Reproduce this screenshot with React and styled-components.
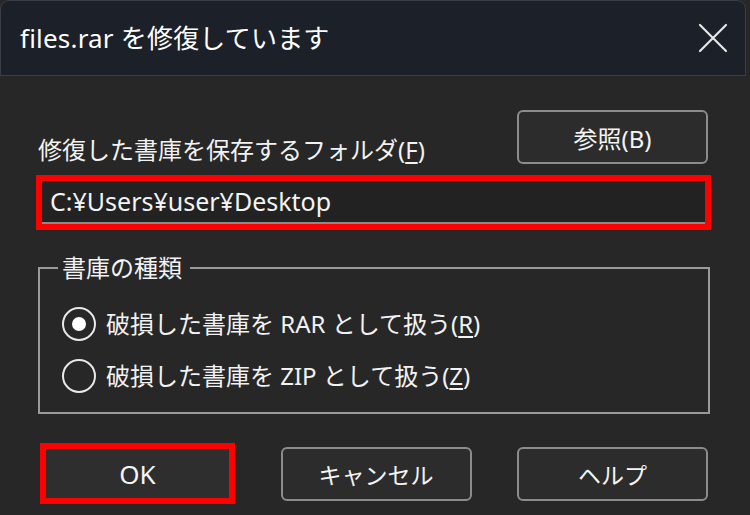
import React from "react";
import styled, { createGlobalStyle } from "styled-components";

const GlobalStyle = createGlobalStyle`
  html, body {
    margin: 0;
    padding: 0;
    background: #272727;
  }
  body {
    font-family: "Noto Sans", "Noto Sans CJK JP", sans-serif;
    color: #f2f2f2;
  }
`;

export default function App() {
  return (
    <>
      <GlobalStyle />
      <Window>
        <TitleBar>
          <Title>files.rar を修復しています</Title>
          <CloseButton aria-label="閉じる">
            <svg width="30" height="30" viewBox="0 0 30 30">
              <path d="M2 2 L28 28 M28 2 L2 28" stroke="#e6e6e6" strokeWidth="2.2" strokeLinecap="round" />
            </svg>
          </CloseButton>
        </TitleBar>

        <Body>
          <FolderRow>
            <Label>
              修復した書庫を保存するフォルダ(<u>F</u>)
            </Label>
            <Button $size="24px">参照(B)</Button>
          </FolderRow>

          <Highlight $top="11px">
            <PathInput defaultValue="C:¥Users¥user¥Desktop" />
          </Highlight>

          <Group>
            <Legend>書庫の種類</Legend>
            <RadioRow>
              <Radio $checked />
              <span>
                破損した書庫を RAR として扱う(<u>R</u>)
              </span>
            </RadioRow>
            <RadioRow>
              <Radio />
              <span>
                破損した書庫を ZIP として扱う(<u>Z</u>)
              </span>
            </RadioRow>
          </Group>

          <ButtonRow>
            <Highlight>
              <Button $plain $size="26px">OK</Button>
            </Highlight>
            <Button>キャンセル</Button>
            <Button>ヘルプ</Button>
          </ButtonRow>
        </Body>
      </Window>
    </>
  );
}

const Window = styled.div`
  width: 750px;
  height: 515px;
  display: flex;
  flex-direction: column;
  background: #272727;
  overflow: hidden;
`;

const TitleBar = styled.div`
  height: 74px;
  flex-shrink: 0;
  margin: 1px 5px 0 1px;
  padding: 0 20px 0 19px;
  display: flex;
  align-items: center;
  justify-content: space-between;
  background: #1c2029;
  border-radius: 8px 8px 0 0;
  box-shadow: 0 0 0 1px #3a3d44;
`;

const Title = styled.div`
  font-size: 26px;
  color: #ffffff;
  letter-spacing: 0.2px;
  padding-bottom: 3px;
`;

const CloseButton = styled.div`
  display: flex;
  margin-right: -3px;
  margin-top: -1px;
`;

const Body = styled.div`
  flex: 1;
  padding: 35px 39px 0 36px;
  display: flex;
  flex-direction: column;
  & > * {
    flex-shrink: 0;
  }
`;

const FolderRow = styled.div`
  display: flex;
  justify-content: space-between;
  align-items: flex-end;
  padding: 0 3px 0 2px;
`;

const Label = styled.div`
  font-size: 24px;
  line-height: 30px;
  margin-bottom: -1px;
  u {
    text-underline-offset: 3px;
  }
`;

const Button = styled.div`
  width: 191px;
  height: 54px;
  box-sizing: border-box;
  display: flex;
  align-items: center;
  justify-content: center;
  font-size: ${(p) => p.$size || "23px"};
  color: #f4f4f4;
  background: ${(p) => (p.$plain ? "#2e2e2e" : "#2c2c2c")};
  border: ${(p) => (p.$plain ? "none" : "2px solid #8c8c8c")};
  border-radius: ${(p) => (p.$plain ? "0" : "6px")};
`;

const Highlight = styled.div`
  margin-top: ${(p) => p.$top || "0"};
  border: 6px solid #ff0000;
  display: flex;
`;

const PathInput = styled.input`
  flex: 1;
  height: 43px;
  box-sizing: border-box;
  margin: 0;
  padding: 0 0 2px 8px;
  border: none;
  border-bottom: 2px solid #8a8a8a;
  background: #222222;
  color: #f4f4f4;
  font-family: "Noto Sans", "Noto Sans CJK JP", sans-serif;
  font-size: 25px;
  outline: none;
`;

const Group = styled.fieldset`
  margin: 26px 1px 0 2px;
  padding: 25px 0 0 22px;
  height: 158px;
  box-sizing: border-box;
  border: 2px solid #9a9a9a;
  display: flex;
  flex-direction: column;
  gap: 15px;
`;

const Legend = styled.legend`
  font-size: 24px;
  line-height: 24px;
  padding: 0 8px 0 4px;
  margin-left: -4px;
`;

const RadioRow = styled.label`
  display: flex;
  align-items: center;
  gap: 10px;
  font-size: 24px;
  line-height: 37px;
  u {
    text-underline-offset: 3px;
  }
`;

const Radio = styled.span`
  width: 34px;
  height: 34px;
  box-sizing: border-box;
  border-radius: 50%;
  border: 2.5px solid #e8e8e8;
  display: flex;
  align-items: center;
  justify-content: center;
  flex-shrink: 0;
  &::after {
    content: "";
    width: 14px;
    height: 14px;
    border-radius: 50%;
    background: ${(p) => (p.$checked ? "#ffffff" : "transparent")};
  }
`;

const ButtonRow = styled.div`
  margin: 29px 0 0 4px;
  display: flex;
  align-items: center;
  justify-content: space-between;
  padding-right: 3px;
  & > ${Highlight} ${Button} {
    width: 183px;
    height: 49px;
  }
`;
